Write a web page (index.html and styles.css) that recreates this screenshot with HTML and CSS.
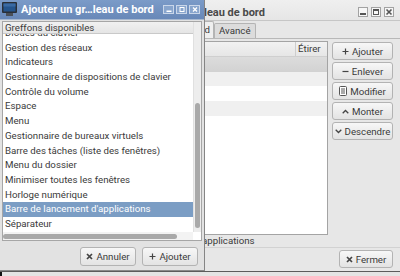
FILE: index.html
```html
<!DOCTYPE html>
<html lang="fr">
<head>
<meta charset="utf-8">
<title>Ajouter un greffon au tableau de bord</title>
<link rel="stylesheet" href="styles.css">
</head>
<body>
<div class="screen">
  <section class="win main">
    <header class="titlebar inactive">
      <span class="title">Préférences du tableau de bord</span>
      <div class="wbtns">
        <span class="wbtn"><svg width="8" height="8" viewBox="0 0 8 8"><rect x="1" y="5" width="6" height="2" fill="#555"/></svg></span>
        <span class="wbtn"><svg width="8" height="8" viewBox="0 0 8 8"><rect x="1.5" y="1.5" width="5" height="5" fill="none" stroke="#555"/><rect x="1" y="1" width="6" height="2" fill="#555"/></svg></span>
        <span class="wbtn"><svg width="8" height="8" viewBox="0 0 8 8"><path d="M1.5 1.5l5 5M6.5 1.5l-5 5" stroke="#555" stroke-width="1.6"/></svg></span>
      </div>
    </header>
    <div class="tabs">
      <span class="tab current">Greffons du tableau de bord</span>
      <span class="tab">Avancé</span>
    </div>
    <div class="page">
      <div class="plugins">
        <div class="pl-list">
          <div class="pl-head"><span class="col-name">Nom</span><span class="col-stretch">Étirer</span></div>
          <div class="pl-row sel"></div>
          <div class="pl-row alt"></div>
          <div class="pl-row"></div>
          <div class="pl-row alt"></div>
        </div>
        <div class="side-btns">
          <button class="btn"><svg width="7" height="7" viewBox="0 0 7 7"><path d="M3.5 0.5v6M0.5 3.5h6" stroke="#444" stroke-width="1.2"/></svg>Ajouter</button>
          <button class="btn"><svg width="7" height="7" viewBox="0 0 7 7"><path d="M0.5 3.5h6" stroke="#444" stroke-width="1.2"/></svg>Enlever</button>
          <button class="btn"><svg width="8" height="10" viewBox="0 0 8 10"><rect x="0.5" y="0.5" width="7" height="9" rx="1" fill="#fff" stroke="#555"/><path d="M2 3h4M2 5h4M2 7h4" stroke="#555"/></svg>Modifier</button>
          <button class="btn"><svg width="7" height="5" viewBox="0 0 7 5"><path d="M0.7 4.3L3.5 1.5l2.8 2.8" fill="none" stroke="#444" stroke-width="1.3"/></svg>Monter</button>
          <button class="btn"><svg width="7" height="5" viewBox="0 0 7 5"><path d="M0.7 0.7L3.5 3.5l2.8-2.8" fill="none" stroke="#444" stroke-width="1.3"/></svg>Descendre</button>
        </div>
      </div>
      <div class="desc">Barre de lancement d'applications</div>
    </div>
    <footer class="foot">
      <button class="btn close"><svg width="7" height="7" viewBox="0 0 7 7"><path d="M1 1l5 5M6 1l-5 5" stroke="#444" stroke-width="1.7"/></svg>Fermer</button>
    </footer>
  </section>

  <section class="win dialog">
    <header class="titlebar active">
      <svg class="appicon" width="15" height="14" viewBox="0 0 15 14"><rect x="0" y="0" width="15" height="11" rx="1" fill="#2a2f36"/><rect x="1.5" y="1.5" width="12" height="8" fill="#24548c"/><rect x="1.5" y="1.5" width="12" height="3" fill="#3a6aa3"/><rect x="4" y="11" width="7" height="3" fill="#4a4f57"/></svg>
      <span class="title">Ajouter un gr…leau de bord</span>
      <div class="wbtns">
        <span class="wbtn"><svg width="8" height="7" viewBox="0 0 8 7"><rect x="1.5" y="4.5" width="5" height="1.5" fill="#fff"/></svg></span>
        <span class="wbtn"><svg width="8" height="7" viewBox="0 0 8 7"><rect x="2" y="1.5" width="4" height="4" fill="none" stroke="#fff"/></svg></span>
        <span class="wbtn"><svg width="8" height="7" viewBox="0 0 8 7"><path d="M2 1.5l4 4M6 1.5l-4 4" stroke="#fff" stroke-width="1.3"/></svg></span>
      </div>
    </header>
    <div class="dlg-body">
      <div class="tree">
        <div class="tree-main">
          <div class="tree-head">Greffons disponibles</div>
          <div class="viewport">
            <ul class="rows">
              <li>Diodes du clavier</li>
              <li>Gestion des réseaux</li>
              <li>Indicateurs</li>
              <li>Gestionnaire de dispositions de clavier</li>
              <li>Contrôle du volume</li>
              <li>Espace</li>
              <li>Menu</li>
              <li>Gestionnaire de bureaux virtuels</li>
              <li>Barre des tâches (liste des fenêtres)</li>
              <li>Menu du dossier</li>
              <li>Minimiser toutes les fenêtres</li>
              <li>Horloge numérique</li>
              <li class="sel">Barre de lancement d'applications</li>
              <li>Séparateur</li>
            </ul>
          </div>
          <div class="hscroll"><div class="hthumb"></div></div>
        </div>
        <div class="vscroll"><div class="vthumb"></div></div>
      </div>
      <div class="dlg-actions">
        <button class="btn"><svg width="7" height="7" viewBox="0 0 7 7"><path d="M1 1l5 5M6 1l-5 5" stroke="#444" stroke-width="1.7"/></svg>Annuler</button>
        <button class="btn"><svg width="7" height="7" viewBox="0 0 7 7"><path d="M3.5 0.5v6M0.5 3.5h6" stroke="#444" stroke-width="1.2"/></svg>Ajouter</button>
      </div>
    </div>
  </section>
  <span class="corner"></span>
</div>
</body>
</html>
```

FILE: styles.css
```css
* { box-sizing: border-box; margin: 0; padding: 0; }
html, body { width: 400px; height: 276px; overflow: hidden; }
body {
  font-family: Roboto, "Noto Sans", sans-serif;
  font-size: 9.7px;
  color: #3a3a3a;
  background: #e4e4e4;
}
.screen { position: relative; width: 400px; height: 276px; background: #e4e4e4; overflow: hidden; }

.win { position: absolute; top: 0; display: flex; flex-direction: column; }

/* ---------- background window ---------- */
.main {
  left: 0;
  width: 400px;
  height: 272px;
  background: #e7e7e7;
  border-bottom: 1px solid #5c5c5c;
}
.titlebar { display: flex; align-items: center; flex: none; }
.titlebar .title { font-weight: 700; font-size: 11px; white-space: nowrap; }
.titlebar.inactive {
  height: 21px;
  padding-top: 4px;
  background: linear-gradient(#efefef, #e6e6e6);
  border-bottom: 1px solid #c6c6c6;
  color: #4a4a4a;
}
.main .title { width: 265px; text-align: right; }
.wbtns { margin-left: auto; display: flex; }
.inactive .wbtns { gap: 3px; padding-right: 6px; }
.inactive .wbtn {
  width: 10px; height: 10px;
  border: 1px solid #a2a2a2;
  background: #f6f6f6;
  display: flex; align-items: center; justify-content: center;
}

.tabs { display: flex; align-items: flex-end; height: 17px; flex: none; }
.tab {
  height: 15px;
  padding: 0 4px;
  line-height: 14px;
  border: 1px solid #b4b4b4;
  border-bottom: none;
  border-radius: 2px 2px 0 0;
  background: #dcdcdc;
  white-space: nowrap;
}
.tab.current {
  width: 214px;
  height: 17px;
  line-height: 16px;
  text-align: right;
  background: #efefef;
  padding-right: 3px;
}
.page {
  flex: none;
  height: 209px;
  border-top: 1px solid #b8b8b8;
  padding: 2px 7px 0 0;
  display: flex;
  flex-direction: column;
}
.plugins { display: flex; gap: 4px; height: 194px; }
.pl-list {
  flex: 1;
  background: #fff;
  border: 1px solid #a4a4a4;
}
.pl-head {
  display: flex;
  height: 15px;
  background: linear-gradient(#f2f2f2, #e6e6e6);
  border-bottom: 1px solid #cfcfcf;
  line-height: 14px;
}
.col-name { flex: 1; padding-left: 4px; }
.col-stretch { width: 32px; border-left: 1px solid #cdcdcd; padding-left: 2px; }
.pl-row { height: 14.7px; }
.pl-row.sel { background: linear-gradient(#dcdcdc, #d2d2d2); }
.pl-row.alt { background: #f0f0f0; }

.side-btns { width: 61px; display: flex; flex-direction: column; gap: 2px; padding-top: 1px; }
.btn {
  font: inherit;
  color: #3a3a3a;
  height: 18px;
  border: 1px solid #b3b3b3;
  border-radius: 3px;
  background: linear-gradient(#f7f7f7, #e3e3e3);
  display: flex; align-items: center; justify-content: center;
  gap: 3px;
  white-space: nowrap;
}
.desc { height: 12px; line-height: 12px; padding-left: 109px; white-space: nowrap; }

.foot {
  flex: none;
  border-top: 1px solid #d2d2d2;
  padding: 2px 7px 0 0;
  display: flex;
  justify-content: flex-end;
}
.btn.close { width: 54px; }

/* ---------- dialog ---------- */
.dialog {
  left: 0;
  width: 205px;
  height: 271px;
  background: #e2e2e2;
  border-right: 1px solid #858585;
  border-bottom: 1px solid #8a8a8a;
}
.titlebar.active {
  height: 20px;
  padding: 0 4px 1px 2px;
  background: linear-gradient(#7b9bc8, #6888b8);
  border-bottom: 1px solid #a7b8cf;
  color: #fff;
}
.appicon { flex: none; margin-right: 4px; }
.active .wbtns { gap: 2px; }
.active .wbtn {
  width: 11px; height: 9px;
  border: 1px solid #c9d6e9;
  background: #88a5cd;
  display: flex; align-items: center; justify-content: center;
}

.dlg-body { flex: 1; padding: 1px 2px 0 2px; display: flex; flex-direction: column; }
.tree {
  height: 220px;
  width: 200px;
  border: 1px solid #a6a6a6;
  background: #fff;
  display: flex;
}
.tree-main { flex: 1; display: flex; flex-direction: column; min-width: 0; }
.tree-head {
  height: 12px;
  line-height: 11px;
  padding-left: 2px;
  background: linear-gradient(#f1f1f1, #e5e5e5);
  border-bottom: 1px solid #c9c9c9;
  white-space: nowrap;
  position: relative;
  z-index: 1;
}
.viewport { flex: 1; overflow: hidden; display: flow-root; }
.rows { list-style: none; margin-top: -8px; }
.rows li { height: 14.7px; line-height: 14.7px; padding-left: 2px; white-space: nowrap; }
.rows li.sel { background: #7b9dc4; color: #fff; }
.hscroll { height: 8px; background: #f3f3f3; padding-top: 2px; }
.hthumb { width: 174px; height: 5px; border-radius: 3px; background: #a9a9a9; }
.vscroll { width: 8px; height: 210px; background: #ededed; border-left: 1px solid #e0e0e0; padding-top: 81px; }
.vthumb { width: 5px; height: 125px; margin-left: 1px; border-radius: 3px; background: #a9a9a9; }

.dlg-actions { display: flex; justify-content: flex-end; gap: 6px; padding: 6px 4px 0 0; }
.dlg-actions .btn { width: 56px; height: 19px; }

.corner { position: absolute; left: 0; top: 272px; width: 2px; height: 4px; background: #111; }
```
